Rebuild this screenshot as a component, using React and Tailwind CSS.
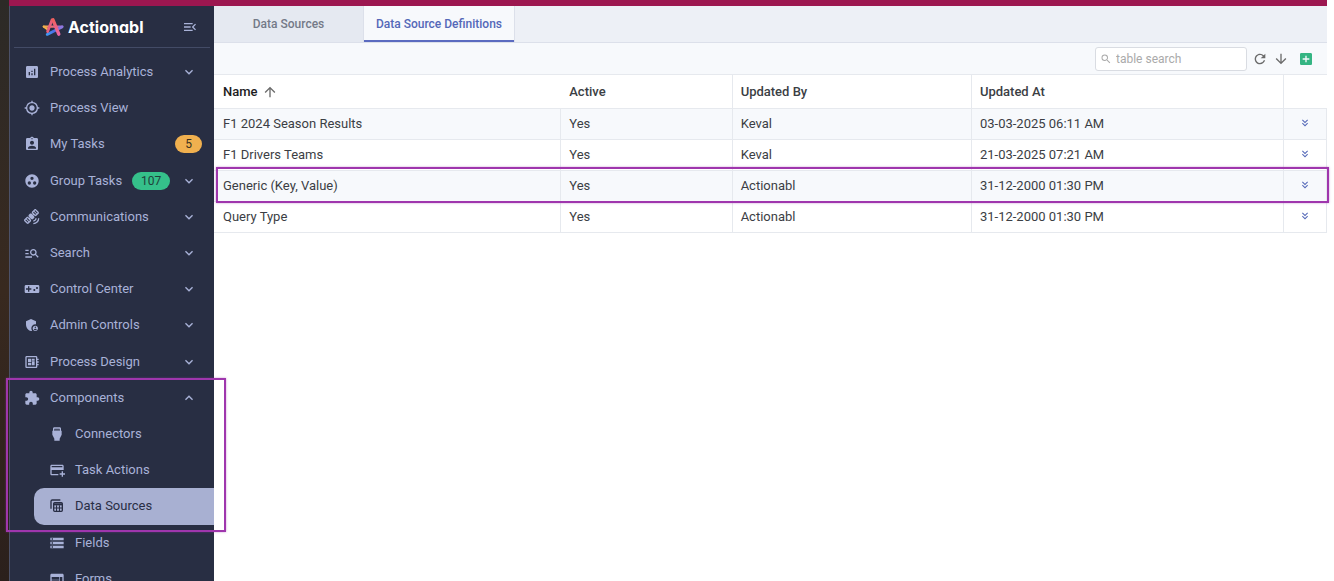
import { useState } from "react";
import {
  MdAddBox,
  MdAddCard,
  MdAdminPanelSettings,
  MdAnalytics,
  MdArrowDownward,
  MdArrowUpward,
  MdAssignmentInd,
  MdDeveloperBoard,
  MdExtension,
  MdGpsFixed,
  MdGroupWork,
  MdKeyboardArrowDown,
  MdKeyboardArrowUp,
  MdKeyboardDoubleArrowDown,
  MdManageSearch,
  MdMenuOpen,
  MdRefresh,
  MdSatelliteAlt,
  MdSearch,
  MdSettingsInputHdmi,
  MdStorage,
  MdVideogameAsset,
  MdWeb,
} from "react-icons/md";

// two stacked tables
const TableStackIcon = ({ className }) => (
  <svg viewBox="0 0 24 24" className={className} fill="none" stroke="currentColor" strokeWidth="2">
    <path d="M3 16V5a2 2 0 0 1 2-2h12" />
    <rect x="7" y="7" width="13" height="13" rx="1.5" />
    <path d="M7 9.5h13" strokeWidth="3" />
    <path d="M7 15h13M11.3 11v9M15.7 11v9" strokeWidth="1.6" />
  </svg>
);

const LogoMark = () => (
  <svg viewBox="0 0 22 20" className="h-5 w-[22px]" fill="none" strokeLinecap="round" strokeLinejoin="round">
    <defs>
      <linearGradient id="leg" gradientUnits="userSpaceOnUse" x1="0" y1="2" x2="0" y2="18">
        <stop offset="0" stopColor="#f0605a" />
        <stop offset="1" stopColor="#ea66a8" />
      </linearGradient>
      <linearGradient id="bar" gradientUnits="userSpaceOnUse" x1="1" y1="0" x2="21" y2="0">
        <stop offset="0" stopColor="#f2b84a" />
        <stop offset="0.35" stopColor="#f08a5c" />
        <stop offset="0.6" stopColor="#d85c9c" />
        <stop offset="1" stopColor="#8d78e0" />
      </linearGradient>
      <linearGradient id="base" gradientUnits="userSpaceOnUse" x1="4" y1="17" x2="19" y2="10">
        <stop offset="0" stopColor="#3f9df5" />
        <stop offset="0.5" stopColor="#4c6ee6" />
        <stop offset="1" stopColor="#8d78e0" />
      </linearGradient>
    </defs>
    <path d="M1.8 9.6 6 12.6" stroke="#f2b84a" strokeWidth="2.2" />
    <path d="M1.8 9.6H20.4" stroke="url(#bar)" strokeWidth="2.2" />
    <path d="M5.2 17.4 20 10" stroke="url(#base)" strokeWidth="2.8" />
    <path d="M5.6 14.6 10 3" stroke="#e8607e" strokeWidth="2.8" />
    <path d="M11 2.8 16.8 17.2" stroke="url(#leg)" strokeWidth="3.4" />
  </svg>
);

const menu = [
  { label: "Process Analytics", icon: MdAnalytics, arrow: "down" },
  { label: "Process View", icon: MdGpsFixed },
  { label: "My Tasks", icon: MdAssignmentInd, count: 5 },
  { label: "Group Tasks", icon: MdGroupWork, count: 107, arrow: "down" },
  { label: "Communications", icon: MdSatelliteAlt, arrow: "down" },
  { label: "Search", icon: MdManageSearch, arrow: "down" },
  { label: "Control Center", icon: MdVideogameAsset, arrow: "down" },
  { label: "Admin Controls", icon: MdAdminPanelSettings, arrow: "down" },
  { label: "Process Design", icon: MdDeveloperBoard, arrow: "down" },
  { label: "Components", icon: MdExtension, arrow: "up" },
  { label: "Connectors", icon: MdSettingsInputHdmi, child: true },
  { label: "Task Actions", icon: MdAddCard, child: true },
  { label: "Data Sources", icon: TableStackIcon, child: true, active: true },
  { label: "Fields", icon: MdStorage, child: true },
  { label: "Forms", icon: MdWeb, child: true },
];

const rows = [
  { name: "F1 2024 Season Results", active: "Yes", by: "Keval", at: "03-03-2025 06:11 AM" },
  { name: "F1 Drivers Teams", active: "Yes", by: "Keval", at: "21-03-2025 07:21 AM" },
  { name: "Generic (Key, Value)", active: "Yes", by: "Actionabl", at: "31-12-2000 01:30 PM", marked: true },
  { name: "Query Type", active: "Yes", by: "Actionabl", at: "31-12-2000 01:30 PM" },
];

function MenuItem({ item }) {
  const Icon = item.icon;
  return (
    <li className={item.child ? "flex pl-6" : "flex"}>
      <a
        href="#"
        className={
          item.active
            ? "flex grow items-center rounded-l-[10px] bg-[#a8b0d2] pl-[15px] text-[#282e45]"
            : item.child
              ? "flex grow items-center pl-[15px]"
              : "flex grow items-center pr-3 pl-[14px]"
        }
      >
        <Icon className="h-4 w-4 shrink-0" />
        <span className="ml-[10px]">{item.label}</span>
        {item.count && !item.arrow && (
          <span className="ml-auto rounded-full bg-[#f0b04f] px-[10px] text-xs leading-[18px] text-[#3a3020]">
            {item.count}
          </span>
        )}
        {item.count && item.arrow && (
          <span className="ml-[10px] rounded-full bg-[#35c08a] px-[9px] text-xs leading-[18px] text-[#1f3f3a]">
            {item.count}
          </span>
        )}
        {item.arrow === "down" && <MdKeyboardArrowDown className="mr-[5px] ml-auto h-4 w-4" />}
        {item.arrow === "up" && <MdKeyboardArrowUp className="mr-[5px] ml-auto h-4 w-4" />}
      </a>
    </li>
  );
}

function Sidebar() {
  return (
    <aside className="relative z-10 w-[205px] shrink-0 border-l border-[#4c5168] bg-[#282e43] text-[#a9b2d8]">
      <div className="mr-1 ml-1 flex h-[42px] items-center border-b border-[#434b66] pr-3 pl-7">
        <LogoMark />
        <span className="ml-1 font-['Inter',sans-serif] text-base leading-5 font-bold text-white [font-feature-settings:'cv11']">
          Actionabl
        </span>
        <button type="button" aria-label="Collapse menu" className="ml-auto">
          <MdMenuOpen className="h-4 w-4" />
        </button>
      </div>
      <nav>
        <ul className="relative mt-[6px] grid h-[543px] auto-rows-fr text-[13px] leading-4">
          {menu.map((item) => (
            <MenuItem key={item.label} item={item} />
          ))}
          <li
            aria-hidden="true"
            className="pointer-events-none absolute -top-[2px] -right-3 -bottom-[7px] -left-1 row-start-10 row-end-14 border-2 border-[#9f36ad] shadow-[0_0_2px_#9f36ad80]"
          />
        </ul>
      </nav>
    </aside>
  );
}

function Toolbar({ query, setQuery }) {
  return (
    <div className="flex h-[31px] items-center justify-end bg-[#f7f9fc] pr-[13px] text-[#6b6b6b]">
      <label className="flex h-6 w-[152px] items-center rounded-[3px] border border-[#d9dce2] bg-white px-1">
        <MdSearch className="h-3 w-3 shrink-0 text-[#aaaaaa]" />
        <input
          type="text"
          aria-label="table search"
          placeholder="table search"
          className="ml-1 w-full min-w-0 text-xs leading-4 outline-none placeholder:text-[#aaaaaa]"
          value={query}
          onChange={(e) => setQuery(e.target.value)}
        />
      </label>
      <button type="button" aria-label="Refresh" className="ml-[5px]">
        <MdRefresh className="h-4 w-4" />
      </button>
      <button type="button" aria-label="Download" className="ml-[5px]">
        <MdArrowDownward className="h-4 w-4" />
      </button>
      <button type="button" aria-label="Add" className="ml-[9px] text-[#35b583]">
        <MdAddBox className="h-4 w-4" />
      </button>
    </div>
  );
}

export default function App() {
  const [query, setQuery] = useState("");

  const visible = rows.filter((r) => r.name.toLowerCase().includes(query.toLowerCase()));

  return (
    <div className="flex h-screen overflow-hidden bg-white font-['Roboto',sans-serif]">
      <div className="w-[9px] shrink-0 bg-linear-to-b from-[#2c2a27] via-[#38291f] to-[#2b201c]" />
      <div className="mr-[7px] flex min-w-0 grow flex-col">
        <div className="h-[6px] shrink-0 bg-[#9c1750]" />
        <div className="flex min-h-0 grow">
          <Sidebar />
          <main className="min-w-0 grow">
            <div className="flex h-[37px] border-b border-[#dce0ea] bg-[#edf0f6] text-xs font-medium">
              <button type="button" className="w-[150px] border-r border-[#dce0ea] bg-[#e5e9f1] text-[#747a88]">
                Data Sources
              </button>
              <button
                type="button"
                className="w-[150px] border-b-2 border-[#5b6bc0] bg-[#f7f9fc] pt-[2px] text-[#5468b8]"
              >
                Data Source Definitions
              </button>
              <span className="w-px bg-[#dce0ea]" />
            </div>

            <Toolbar query={query} setQuery={setQuery} />

            <table className="w-full table-fixed border-separate border-spacing-0 border-t border-[#e6e9ee] text-left text-[13px] leading-4 text-[#3b3e44]">
              <thead>
                <tr className="h-[34px]">
                  <th className="w-[31.2%] border-b border-[#e6e9ee] px-[9px] font-medium text-[#1c1c1e]">
                    <span className="flex items-center gap-1">
                      Name
                      <MdArrowUpward className="h-4 w-4 text-[#6b6b6b]" />
                    </span>
                  </th>
                  <th className="w-[15.4%] border-r border-b border-[#e6e9ee] px-2 font-medium">Active</th>
                  <th className="w-[21.5%] border-r border-b border-[#e6e9ee] px-2 font-medium">Updated By</th>
                  <th className="border-r border-b border-[#e6e9ee] px-2 font-medium">Updated At</th>
                  <th className="w-[43px] border-b border-[#e6e9ee]" />
                </tr>
              </thead>
              <tbody>
                {visible.map((row) => (
                  <tr key={row.name} className="relative h-[31px] odd:bg-[#f7f9fc]">
                    <td className="border-r border-b border-[#e6e9ee] px-[9px]">{row.name}</td>
                    <td className="border-r border-b border-[#e6e9ee] px-2">{row.active}</td>
                    <td className="border-r border-b border-[#e6e9ee] px-2">{row.by}</td>
                    <td className="border-r border-b border-[#e6e9ee] px-2">{row.at}</td>
                    <td className="border-r border-b border-[#e6e9ee] pb-[2px]">
                      <button type="button" aria-label={`More for ${row.name}`} className="mx-auto block text-[#5468b8]">
                        <MdKeyboardDoubleArrowDown className="h-3 w-3" />
                      </button>
                      {row.marked && (
                        <span className="pointer-events-none absolute -top-1 -right-[2px] -bottom-px left-[2px] z-10 border-2 border-[#9f36ad] shadow-[0_0_2px_#9f36ad80]" />
                      )}
                    </td>
                  </tr>
                ))}
              </tbody>
            </table>
          </main>
        </div>
      </div>
    </div>
  );
}
